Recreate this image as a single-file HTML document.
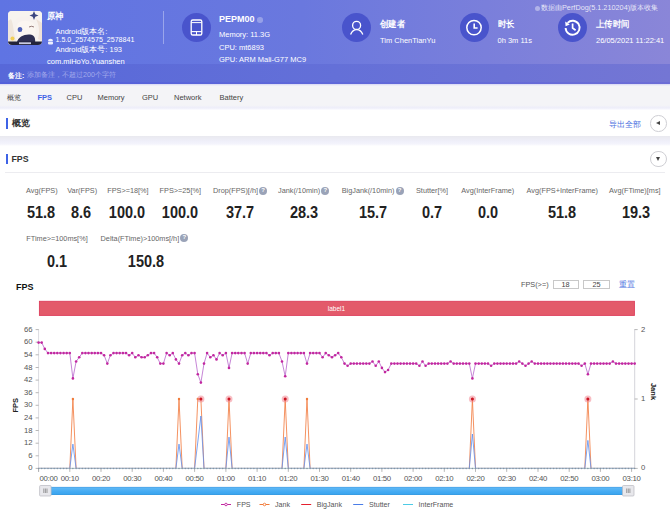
<!DOCTYPE html>
<html><head><meta charset="utf-8">
<style>
*{margin:0;padding:0;box-sizing:border-box}
html,body{width:670px;height:510px;overflow:hidden;background:#fff;font-family:"Liberation Sans",sans-serif;position:relative}
.a{position:absolute;white-space:nowrap}
#hdr{position:absolute;left:0;top:0;width:670px;height:84px;background:linear-gradient(90deg,#5f74e3 0%,#6a78de 45%,#8a86d8 100%)}
#rmk{position:absolute;left:0;top:63.8px;width:670px;height:20.2px;background:linear-gradient(90deg,#5768d9 0%,#6470d8 50%,#7476d4 100%)}
.circ{position:absolute;width:29px;height:29px;border-radius:50%;background:#4954cc;top:13px}
.circ svg{position:absolute;left:0;top:0}
.ht{position:absolute;color:#fff;font-size:7.5px;line-height:9px;white-space:nowrap}
.hb{position:absolute;color:#fff;font-size:9px;line-height:10px;font-weight:bold;white-space:nowrap}
#tabs{position:absolute;left:0;top:84px;width:670px;height:26px;background:linear-gradient(180deg,#f4f4f7 0%,#f4f4f7 82%,#eeeef9 90%,#f3f3fc 96%,#ffffff 100%)}
.tab{position:absolute;top:92.7px;font-size:7.5px;color:#444;line-height:10px;white-space:nowrap}
.card{position:absolute;left:0;width:670px;background:#fff}
.bar{position:absolute;left:6px;width:2px;background:#3e63e6}
.sec{position:absolute;left:11.5px;font-size:8.8px;font-weight:bold;color:#333;line-height:11px}
.lbl{position:absolute;font-size:7.3px;color:#666;line-height:9px;white-space:nowrap;text-align:center}
.val{position:absolute;font-size:15.6px;font-weight:bold;color:#222;line-height:16px;white-space:nowrap;text-align:center;transform:scaleX(0.93)}
.q{display:inline-block;width:7.5px;height:7.5px;border-radius:50%;background:#9aa3b8;color:#fff;font-size:6px;line-height:7.5px;text-align:center;vertical-align:0px;margin-left:1.5px;font-weight:bold;position:relative;top:-1.2px;width:8px;height:8px;margin-left:1.2px}
.rbtn{position:absolute;width:16.5px;height:16.5px;border-radius:50%;border:1px solid #cfcfd4;background:#fff}
</style></head><body>
<div id="hdr"></div>
<div id="rmk"></div>
<div class="a" style="left:0;top:81.5px;width:670px;height:2.5px;background:linear-gradient(90deg,#5260da 0%,#5f68d9 50%,#6c6dd6 100%)"></div>

<!-- app icon -->
<svg class="a" style="left:8px;top:11px" width="34" height="34" viewBox="0 0 34 34">
<defs><clipPath id="ic"><rect x="0" y="0" width="34" height="34" rx="4"/></clipPath></defs>
<g clip-path="url(#ic)">
<rect x="0" y="0" width="34" height="34" fill="#f7f2ee"/>
<path d="M0 0 H34 V10 C28 6 20 4 12 6 C6 8 3 14 2 22 V34 H0 Z" fill="#f7f4ef"/>
<path d="M3 8 C6 14 5 22 8 30 L4 34 H0 V10 Z" fill="#efe6dc"/>
<path d="M10 12 C14 9 22 9 26 13 C29 17 28 25 24 29 C19 32 13 31 10 27 C8 22 8 16 10 12 Z" fill="#fbf6f1"/>
<ellipse cx="12" cy="18.5" rx="2.3" ry="2.6" fill="#4f62b8"/>
<path d="M21 16 Q23.5 14.5 26 16" fill="none" stroke="#7a5a5a" stroke-width="0.8"/>
<path d="M26 0 L27.3 3.2 L30.5 4.5 L27.3 5.8 L26 9 L24.7 5.8 L21.5 4.5 L24.7 3.2 Z" fill="#3a4580"/>
<path d="M28 8 C31 14 32 20 30 28 L34 30 V12 Z" fill="#efe2d8"/>
<path d="M9 31 C10 26 16 23 22 23.5 C26 24 28 26 27 34 H8 Z" fill="#2e2f52"/>
<circle cx="4.5" cy="27.5" r="2" fill="#f2cf55"/>
<rect x="0" y="30.5" width="34" height="3.5" fill="#23243a"/>
<rect x="11" y="31.3" width="12" height="1.8" fill="#c9cbe0"/>
</g></svg>
<div class="hb" style="left:47px;top:11px;transform:scaleX(0.93);transform-origin:0 0">原神</div>
<div class="ht" style="left:55.5px;top:27px">Android版本名:</div>
<svg class="a" style="left:46.5px;top:37.5px" width="7" height="7" viewBox="0 0 7 7"><path d="M1 3 A2.5 2.3 0 0 1 6 3 Z" fill="#eef0ff"/><rect x="1" y="3.4" width="5" height="3" rx="0.8" fill="#eef0ff"/></svg>
<div class="ht" style="left:55.5px;top:36px;font-size:7.1px">1.5.0_2574575_2578841</div>
<div class="ht" style="left:55.5px;top:45px">Android版本号: 193</div>
<div class="ht" style="left:47px;top:57px">com.miHoYo.Yuanshen</div>

<div class="a" style="left:163px;top:11px;width:1px;height:33px;background:rgba(255,255,255,0.35)"></div>

<!-- device -->
<div class="circ" style="left:181.5px">
<svg width="29" height="29" viewBox="0 0 29 29"><rect x="9.2" y="7" width="10.6" height="15" rx="1.6" fill="none" stroke="#fff" stroke-width="1.3"/><line x1="9.2" y1="9.6" x2="19.8" y2="9.6" stroke="#fff" stroke-width="1"/><line x1="9.2" y1="18.6" x2="19.8" y2="18.6" stroke="#fff" stroke-width="1.1"/><line x1="14.5" y1="18.6" x2="14.5" y2="22" stroke="#fff" stroke-width="1"/></svg>
</div>
<div class="hb" style="left:219px;top:14px">PEPM00<span style="display:inline-block;width:5.5px;height:5.5px;border-radius:50%;background:rgba(255,255,255,0.3);margin-left:2.5px;vertical-align:-0.5px"></span></div>
<div class="ht" style="left:219px;top:30px">Memory: 11.3G</div>
<div class="ht" style="left:219px;top:43px">CPU: mt6893</div>
<div class="ht" style="left:219px;top:55px">GPU: ARM Mali-G77 MC9</div>

<!-- creator -->
<div class="circ" style="left:342px">
<svg width="29" height="29" viewBox="0 0 29 29"><circle cx="14.6" cy="12.4" r="4" fill="none" stroke="#fff" stroke-width="1.3"/><path d="M8.6 21.6 C9.8 18.4 12 16.6 14.7 16.6 C17.4 16.6 19.6 18.4 20.8 21.6" fill="none" stroke="#fff" stroke-width="1.3"/></svg>
</div>
<div class="hb" style="left:380px;top:18.5px;transform:scaleX(0.93);transform-origin:0 0">创建者</div>
<div class="ht" style="left:380px;top:35.5px">Tim ChenTianYu</div>

<!-- duration -->
<div class="circ" style="left:459.5px">
<svg width="29" height="29" viewBox="0 0 29 29"><circle cx="14" cy="14.6" r="7.2" fill="none" stroke="#fff" stroke-width="1.5"/><path d="M14.2 10.4 V15 H17.6" fill="none" stroke="#fff" stroke-width="1.6"/></svg>
</div>
<div class="hb" style="left:497.5px;top:18.5px;transform:scaleX(0.93);transform-origin:0 0">时长</div>
<div class="ht" style="left:497.5px;top:35.5px">0h 3m 11s</div>

<!-- upload -->
<div class="circ" style="left:558px">
<svg width="29" height="29" viewBox="0 0 29 29"><path d="M9.6 9.8 A7 7 0 1 1 7.6 15" fill="none" stroke="#fff" stroke-width="1.9"/><path d="M7.2 8.6 L7.6 13.2 L11.8 11.6 Z" fill="#fff"/><path d="M14.6 10.6 V15 L17.6 17.2" fill="none" stroke="#fff" stroke-width="1.7"/></svg>
</div>
<div class="hb" style="left:596px;top:18.5px;transform:scaleX(0.93);transform-origin:0 0">上传时间</div>
<div class="ht" style="left:596px;top:35.5px">26/05/2021 11:22:41</div>

<div class="a" style="left:534.5px;top:5.5px;width:5px;height:5px;border-radius:50%;background:rgba(255,255,255,0.4)"></div>
<div class="ht" style="left:541px;top:2.6px;font-size:7.3px;color:rgba(255,255,255,0.82)">数据由PerfDog(5.1.210204)版本收集</div>

<!-- remark -->
<div class="ht" style="left:8px;top:71px;font-weight:bold;font-size:7px">备注:</div>
<div class="ht" style="left:27px;top:71px;color:#a3aaec;font-size:7.1px">添加备注，不超过200个字符</div>

<!-- tabs -->
<div id="tabs"></div>
<div class="a" style="left:0;top:84px;width:670px;height:2px;background:linear-gradient(#d6d6f3,#f3f3f9)"></div>
<div class="tab" style="left:6.5px;font-size:6.9px">概览</div>
<div class="tab" style="left:37.5px;color:#3e63e6;font-weight:bold">FPS</div>
<div class="tab" style="left:66.5px">CPU</div>
<div class="tab" style="left:97.5px">Memory</div>
<div class="tab" style="left:142px">GPU</div>
<div class="tab" style="left:174px">Network</div>
<div class="tab" style="left:219.5px">Battery</div>

<!-- gray bg between cards -->
<div class="a" style="left:0;top:136.3px;width:670px;height:9.4px;background:linear-gradient(180deg,#e9e9ef 0%,#ececf4 25%,#f0f0fa 55%,#f4f4fc 80%,#ffffff 100%)"></div>

<div class="bar" style="top:118px;height:10.5px"></div>
<div class="sec" style="top:117.5px">概览</div>
<div class="a" style="left:608.5px;top:120px;font-size:7.5px;color:#4a6fe0;line-height:10px">导出全部</div>
<div class="rbtn" style="left:650.2px;top:115.3px"><div class="a" style="left:4.9px;top:5.1px;width:0;height:0;border-top:2.5px solid transparent;border-bottom:2.5px solid transparent;border-right:4px solid #444"></div></div>


<div class="bar" style="top:154px;height:9.5px"></div>
<div class="sec" style="top:153.5px">FPS</div>
<div class="rbtn" style="left:650.2px;top:150.6px"><div class="a" style="left:4.6px;top:5.9px;width:0;height:0;border-left:2.5px solid transparent;border-right:2.5px solid transparent;border-top:4px solid #444"></div></div>
<div class="a" style="left:5px;top:172px;width:660px;height:1px;background:#ececf0"></div>

<!-- stats -->
<div class="lbl" style="left:26.1px;top:186px">Avg(FPS)</div>
<div class="val" style="left:0.7px;top:205px;width:80px">51.8</div>
<div class="lbl" style="left:67.3px;top:186px">Var(FPS)</div>
<div class="val" style="left:41.1px;top:205px;width:80px">8.6</div>
<div class="lbl" style="left:107.2px;top:186px">FPS&gt;=18[%]</div>
<div class="val" style="left:87.4px;top:205px;width:80px">100.0</div>
<div class="lbl" style="left:159.6px;top:186px">FPS&gt;=25[%]</div>
<div class="val" style="left:140.2px;top:205px;width:80px">100.0</div>
<div class="lbl" style="left:213px;top:186px">Drop(FPS)[/h]<span class="q">?</span></div>
<div class="val" style="left:199.5px;top:205px;width:80px">37.7</div>
<div class="lbl" style="left:278px;top:186px">Jank(/10min)<span class="q">?</span></div>
<div class="val" style="left:263.7px;top:205px;width:80px">28.3</div>
<div class="lbl" style="left:341.7px;top:186px">BigJank(/10min)<span class="q">?</span></div>
<div class="val" style="left:333.3px;top:205px;width:80px">15.7</div>
<div class="lbl" style="left:416px;top:186px">Stutter[%]</div>
<div class="val" style="left:392.4px;top:205px;width:80px">0.7</div>
<div class="lbl" style="left:461.3px;top:186px">Avg(InterFrame)</div>
<div class="val" style="left:447.7px;top:205px;width:80px">0.0</div>
<div class="lbl" style="left:526.6px;top:186px">Avg(FPS+InterFrame)</div>
<div class="val" style="left:522.2px;top:205px;width:80px">51.8</div>
<div class="lbl" style="left:609.1px;top:186px">Avg(FTime)[ms]</div>
<div class="val" style="left:595.5px;top:205px;width:80px">19.3</div>
<div class="lbl" style="left:26.3px;top:233.6px">FTime&gt;=100ms[%]</div>
<div class="val" style="left:16.7px;top:253.5px;width:80px">0.1</div>
<div class="lbl" style="left:100.6px;top:233.6px">Delta(FTime)&gt;100ms[/h]<span class="q">?</span></div>
<div class="val" style="left:105.9px;top:253.5px;width:80px">150.8</div>

<!-- chart header -->
<div class="a" style="left:16px;top:282px;font-size:9px;font-weight:bold;color:#111;line-height:11px">FPS</div>
<div class="a" style="left:521px;top:280px;font-size:7.3px;color:#555;line-height:9px">FPS(&gt;=)</div>
<div class="a" style="left:552.5px;top:280px;width:26px;height:9px;border:0.8px solid #c8c8c8;font-size:7.3px;line-height:7px;text-align:center;color:#444">18</div>
<div class="a" style="left:583px;top:280px;width:27px;height:9px;border:0.8px solid #c8c8c8;font-size:7.3px;line-height:7px;text-align:center;color:#444">25</div>
<div class="a" style="left:619px;top:280px;font-size:7.5px;color:#4a6fe0;line-height:10px">重置</div>

<svg class="a" style="left:0;top:0" width="670" height="510" viewBox="0 0 670 510">
<rect x="39.4" y="301.3" width="595" height="14.1" fill="#e35a6a" stroke="#dc3d5a" stroke-width="0.9"/>
<text x="336.5" y="311.4" fill="#fff" font-size="6.5" text-anchor="middle" font-family="Liberation Sans">label1</text>
<line x1="38.6" y1="329.1" x2="38.6" y2="472" stroke="#d0d0d8" stroke-width="0.8"/>
<line x1="634.7" y1="329.1" x2="634.7" y2="468.4" stroke="#c8c8d0" stroke-width="0.8"/>
<line x1="35.6" y1="468.4" x2="38.6" y2="468.4" stroke="#999" stroke-width="0.7"/>
<text x="32.6" y="470.4" fill="#555" font-size="7.7" text-anchor="end" font-family="Liberation Sans">0</text>
<line x1="35.6" y1="455.8" x2="38.6" y2="455.8" stroke="#999" stroke-width="0.7"/>
<text x="32.6" y="457.8" fill="#555" font-size="7.7" text-anchor="end" font-family="Liberation Sans">6</text>
<line x1="35.6" y1="443.2" x2="38.6" y2="443.2" stroke="#999" stroke-width="0.7"/>
<text x="32.6" y="445.2" fill="#555" font-size="7.7" text-anchor="end" font-family="Liberation Sans">12</text>
<line x1="35.6" y1="430.5" x2="38.6" y2="430.5" stroke="#999" stroke-width="0.7"/>
<text x="32.6" y="432.5" fill="#555" font-size="7.7" text-anchor="end" font-family="Liberation Sans">18</text>
<line x1="35.6" y1="417.9" x2="38.6" y2="417.9" stroke="#999" stroke-width="0.7"/>
<text x="32.6" y="419.9" fill="#555" font-size="7.7" text-anchor="end" font-family="Liberation Sans">24</text>
<line x1="35.6" y1="405.3" x2="38.6" y2="405.3" stroke="#999" stroke-width="0.7"/>
<text x="32.6" y="407.3" fill="#555" font-size="7.7" text-anchor="end" font-family="Liberation Sans">30</text>
<line x1="35.6" y1="392.7" x2="38.6" y2="392.7" stroke="#999" stroke-width="0.7"/>
<text x="32.6" y="394.7" fill="#555" font-size="7.7" text-anchor="end" font-family="Liberation Sans">36</text>
<line x1="35.6" y1="380.1" x2="38.6" y2="380.1" stroke="#999" stroke-width="0.7"/>
<text x="32.6" y="382.1" fill="#555" font-size="7.7" text-anchor="end" font-family="Liberation Sans">42</text>
<line x1="35.6" y1="367.5" x2="38.6" y2="367.5" stroke="#999" stroke-width="0.7"/>
<text x="32.6" y="369.5" fill="#555" font-size="7.7" text-anchor="end" font-family="Liberation Sans">48</text>
<line x1="35.6" y1="354.8" x2="38.6" y2="354.8" stroke="#999" stroke-width="0.7"/>
<text x="32.6" y="356.8" fill="#555" font-size="7.7" text-anchor="end" font-family="Liberation Sans">54</text>
<line x1="35.6" y1="342.2" x2="38.6" y2="342.2" stroke="#999" stroke-width="0.7"/>
<text x="32.6" y="344.2" fill="#555" font-size="7.7" text-anchor="end" font-family="Liberation Sans">60</text>
<line x1="35.6" y1="329.6" x2="38.6" y2="329.6" stroke="#999" stroke-width="0.7"/>
<text x="32.6" y="331.6" fill="#555" font-size="7.7" text-anchor="end" font-family="Liberation Sans">66</text>
<line x1="634.7" y1="468.4" x2="637.7" y2="468.4" stroke="#999" stroke-width="0.7"/>
<text x="641" y="470.4" fill="#555" font-size="7.7" font-family="Liberation Sans">0</text>
<line x1="634.7" y1="399.0" x2="637.7" y2="399.0" stroke="#999" stroke-width="0.7"/>
<text x="641" y="401.0" fill="#555" font-size="7.7" font-family="Liberation Sans">1</text>
<line x1="634.7" y1="329.6" x2="637.7" y2="329.6" stroke="#999" stroke-width="0.7"/>
<text x="641" y="331.6" fill="#555" font-size="7.7" font-family="Liberation Sans">2</text>
<text transform="translate(18,405.3) rotate(-90)" fill="#222" font-size="7.5" font-weight="bold" text-anchor="middle" font-family="Liberation Sans">FPS</text>
<text transform="translate(651,391.5) rotate(90)" fill="#222" font-size="7.5" font-weight="bold" text-anchor="middle" font-family="Liberation Sans">Jank</text>
<line x1="38.6" y1="468.4" x2="634.7" y2="468.4" stroke="#a9c4cc" stroke-width="1"/>
<line x1="38.6" y1="468.4" x2="38.6" y2="471.9" stroke="#999" stroke-width="0.7"/>
<text x="48.5" y="480.7" fill="#555" font-size="7.8" letter-spacing="-0.3" text-anchor="middle" font-family="Liberation Sans">00:00</text>
<line x1="69.8" y1="468.4" x2="69.8" y2="471.9" stroke="#999" stroke-width="0.7"/>
<text x="69.8" y="480.7" fill="#555" font-size="7.8" letter-spacing="-0.3" text-anchor="middle" font-family="Liberation Sans">00:10</text>
<line x1="101.0" y1="468.4" x2="101.0" y2="471.9" stroke="#999" stroke-width="0.7"/>
<text x="101.0" y="480.7" fill="#555" font-size="7.8" letter-spacing="-0.3" text-anchor="middle" font-family="Liberation Sans">00:20</text>
<line x1="132.2" y1="468.4" x2="132.2" y2="471.9" stroke="#999" stroke-width="0.7"/>
<text x="132.2" y="480.7" fill="#555" font-size="7.8" letter-spacing="-0.3" text-anchor="middle" font-family="Liberation Sans">00:30</text>
<line x1="163.4" y1="468.4" x2="163.4" y2="471.9" stroke="#999" stroke-width="0.7"/>
<text x="163.4" y="480.7" fill="#555" font-size="7.8" letter-spacing="-0.3" text-anchor="middle" font-family="Liberation Sans">00:40</text>
<line x1="194.6" y1="468.4" x2="194.6" y2="471.9" stroke="#999" stroke-width="0.7"/>
<text x="194.6" y="480.7" fill="#555" font-size="7.8" letter-spacing="-0.3" text-anchor="middle" font-family="Liberation Sans">00:50</text>
<line x1="225.9" y1="468.4" x2="225.9" y2="471.9" stroke="#999" stroke-width="0.7"/>
<text x="225.9" y="480.7" fill="#555" font-size="7.8" letter-spacing="-0.3" text-anchor="middle" font-family="Liberation Sans">01:00</text>
<line x1="257.1" y1="468.4" x2="257.1" y2="471.9" stroke="#999" stroke-width="0.7"/>
<text x="257.1" y="480.7" fill="#555" font-size="7.8" letter-spacing="-0.3" text-anchor="middle" font-family="Liberation Sans">01:10</text>
<line x1="288.3" y1="468.4" x2="288.3" y2="471.9" stroke="#999" stroke-width="0.7"/>
<text x="288.3" y="480.7" fill="#555" font-size="7.8" letter-spacing="-0.3" text-anchor="middle" font-family="Liberation Sans">01:20</text>
<line x1="319.5" y1="468.4" x2="319.5" y2="471.9" stroke="#999" stroke-width="0.7"/>
<text x="319.5" y="480.7" fill="#555" font-size="7.8" letter-spacing="-0.3" text-anchor="middle" font-family="Liberation Sans">01:30</text>
<line x1="350.7" y1="468.4" x2="350.7" y2="471.9" stroke="#999" stroke-width="0.7"/>
<text x="350.7" y="480.7" fill="#555" font-size="7.8" letter-spacing="-0.3" text-anchor="middle" font-family="Liberation Sans">01:40</text>
<line x1="381.9" y1="468.4" x2="381.9" y2="471.9" stroke="#999" stroke-width="0.7"/>
<text x="381.9" y="480.7" fill="#555" font-size="7.8" letter-spacing="-0.3" text-anchor="middle" font-family="Liberation Sans">01:50</text>
<line x1="413.1" y1="468.4" x2="413.1" y2="471.9" stroke="#999" stroke-width="0.7"/>
<text x="413.1" y="480.7" fill="#555" font-size="7.8" letter-spacing="-0.3" text-anchor="middle" font-family="Liberation Sans">02:00</text>
<line x1="444.3" y1="468.4" x2="444.3" y2="471.9" stroke="#999" stroke-width="0.7"/>
<text x="444.3" y="480.7" fill="#555" font-size="7.8" letter-spacing="-0.3" text-anchor="middle" font-family="Liberation Sans">02:10</text>
<line x1="475.5" y1="468.4" x2="475.5" y2="471.9" stroke="#999" stroke-width="0.7"/>
<text x="475.5" y="480.7" fill="#555" font-size="7.8" letter-spacing="-0.3" text-anchor="middle" font-family="Liberation Sans">02:20</text>
<line x1="506.7" y1="468.4" x2="506.7" y2="471.9" stroke="#999" stroke-width="0.7"/>
<text x="506.7" y="480.7" fill="#555" font-size="7.8" letter-spacing="-0.3" text-anchor="middle" font-family="Liberation Sans">02:30</text>
<line x1="538.0" y1="468.4" x2="538.0" y2="471.9" stroke="#999" stroke-width="0.7"/>
<text x="538.0" y="480.7" fill="#555" font-size="7.8" letter-spacing="-0.3" text-anchor="middle" font-family="Liberation Sans">02:40</text>
<line x1="569.2" y1="468.4" x2="569.2" y2="471.9" stroke="#999" stroke-width="0.7"/>
<text x="569.2" y="480.7" fill="#555" font-size="7.8" letter-spacing="-0.3" text-anchor="middle" font-family="Liberation Sans">02:50</text>
<line x1="600.4" y1="468.4" x2="600.4" y2="471.9" stroke="#999" stroke-width="0.7"/>
<text x="600.4" y="480.7" fill="#555" font-size="7.8" letter-spacing="-0.3" text-anchor="middle" font-family="Liberation Sans">03:00</text>
<line x1="631.6" y1="468.4" x2="631.6" y2="471.9" stroke="#999" stroke-width="0.7"/>
<text x="631.6" y="480.7" fill="#555" font-size="7.8" letter-spacing="-0.3" text-anchor="middle" font-family="Liberation Sans">03:10</text>
<polyline points="38.6,468.4 41.7,468.4 44.8,468.4 48.0,468.4 51.1,468.4 54.2,468.4 57.3,468.4 60.4,468.4 63.6,468.4 66.7,468.4 69.8,468.4 72.9,399.0 76.1,468.4 79.2,468.4 82.3,468.4 85.4,468.4 88.5,468.4 91.7,468.4 94.8,468.4 97.9,468.4 101.0,468.4 104.1,468.4 107.3,468.4 110.4,468.4 113.5,468.4 116.6,468.4 119.7,468.4 122.9,468.4 126.0,468.4 129.1,468.4 132.2,468.4 135.3,468.4 138.5,468.4 141.6,468.4 144.7,468.4 147.8,468.4 151.0,468.4 154.1,468.4 157.2,468.4 160.3,468.4 163.4,468.4 166.6,468.4 169.7,468.4 172.8,468.4 175.9,468.4 179.0,399.0 182.2,468.4 185.3,468.4 188.4,468.4 191.5,468.4 194.6,468.4 197.8,399.0 200.9,399.0 204.0,468.4 207.1,468.4 210.3,468.4 213.4,468.4 216.5,468.4 219.6,468.4 222.7,468.4 225.9,468.4 229.0,399.0 232.1,468.4 235.2,468.4 238.3,468.4 241.5,468.4 244.6,468.4 247.7,468.4 250.8,468.4 253.9,468.4 257.1,468.4 260.2,468.4 263.3,468.4 266.4,468.4 269.5,468.4 272.7,468.4 275.8,468.4 278.9,468.4 282.0,468.4 285.2,399.0 288.3,468.4 291.4,468.4 294.5,468.4 297.6,468.4 300.8,468.4 303.9,468.4 307.0,399.0 310.1,468.4 313.2,468.4 316.4,468.4 319.5,468.4 322.6,468.4 325.7,468.4 328.8,468.4 332.0,468.4 335.1,468.4 338.2,468.4 341.3,468.4 344.5,468.4 347.6,468.4 350.7,468.4 353.8,468.4 356.9,468.4 360.1,468.4 363.2,468.4 366.3,468.4 369.4,468.4 372.5,468.4 375.7,468.4 378.8,468.4 381.9,468.4 385.0,468.4 388.1,468.4 391.3,468.4 394.4,468.4 397.5,468.4 400.6,468.4 403.8,468.4 406.9,468.4 410.0,468.4 413.1,468.4 416.2,468.4 419.4,468.4 422.5,468.4 425.6,468.4 428.7,468.4 431.8,468.4 435.0,468.4 438.1,468.4 441.2,468.4 444.3,468.4 447.4,468.4 450.6,468.4 453.7,468.4 456.8,468.4 459.9,468.4 463.0,468.4 466.2,468.4 469.3,468.4 472.4,399.0 475.5,468.4 478.7,468.4 481.8,468.4 484.9,468.4 488.0,468.4 491.1,468.4 494.3,468.4 497.4,468.4 500.5,468.4 503.6,468.4 506.7,468.4 509.9,468.4 513.0,468.4 516.1,468.4 519.2,468.4 522.3,468.4 525.5,468.4 528.6,468.4 531.7,468.4 534.8,468.4 538.0,468.4 541.1,468.4 544.2,468.4 547.3,468.4 550.4,468.4 553.6,468.4 556.7,468.4 559.8,468.4 562.9,468.4 566.0,468.4 569.2,468.4 572.3,468.4 575.4,468.4 578.5,468.4 581.6,468.4 584.8,468.4 587.9,399.0 591.0,468.4 594.1,468.4 597.2,468.4 600.4,468.4 603.5,468.4 606.6,468.4 609.7,468.4 612.9,468.4 616.0,468.4 619.1,468.4 622.2,468.4 625.3,468.4 628.5,468.4 631.6,468.4 634.7,468.4" fill="none" stroke="#f2783c" stroke-width="0.9" stroke-opacity="0.9"/>
<circle cx="72.9" cy="399.0" r="1.2" fill="#f07b3a"/>
<circle cx="179.0" cy="399.0" r="1.2" fill="#f07b3a"/>
<circle cx="197.8" cy="399.0" r="1.2" fill="#f07b3a"/>
<circle cx="200.9" cy="399.0" r="1.2" fill="#f07b3a"/>
<circle cx="229.0" cy="399.0" r="1.2" fill="#f07b3a"/>
<circle cx="285.2" cy="399.0" r="1.2" fill="#f07b3a"/>
<circle cx="307.0" cy="399.0" r="1.2" fill="#f07b3a"/>
<circle cx="472.4" cy="399.0" r="1.2" fill="#f07b3a"/>
<circle cx="587.9" cy="399.0" r="1.2" fill="#f07b3a"/>
<circle cx="200.9" cy="399.0" r="3.5" fill="#f27d8a" fill-opacity="0.5"/>
<circle cx="200.9" cy="399.0" r="1.5" fill="#cc1525"/>
<circle cx="229.0" cy="399.0" r="3.5" fill="#f27d8a" fill-opacity="0.5"/>
<circle cx="229.0" cy="399.0" r="1.5" fill="#cc1525"/>
<circle cx="285.2" cy="399.0" r="3.5" fill="#f27d8a" fill-opacity="0.5"/>
<circle cx="285.2" cy="399.0" r="1.5" fill="#cc1525"/>
<circle cx="472.4" cy="399.0" r="3.5" fill="#f27d8a" fill-opacity="0.5"/>
<circle cx="472.4" cy="399.0" r="1.5" fill="#cc1525"/>
<circle cx="587.9" cy="399.0" r="3.5" fill="#f27d8a" fill-opacity="0.5"/>
<circle cx="587.9" cy="399.0" r="1.5" fill="#cc1525"/>
<polyline points="38.6,468.4 41.7,468.4 44.8,468.4 48.0,468.4 51.1,468.4 54.2,468.4 57.3,468.4 60.4,468.4 63.6,468.4 66.7,468.4 69.8,468.4 72.9,444.1 76.1,468.4 79.2,468.4 82.3,468.4 85.4,468.4 88.5,468.4 91.7,468.4 94.8,468.4 97.9,468.4 101.0,468.4 104.1,468.4 107.3,468.4 110.4,468.4 113.5,468.4 116.6,468.4 119.7,468.4 122.9,468.4 126.0,468.4 129.1,468.4 132.2,468.4 135.3,468.4 138.5,468.4 141.6,468.4 144.7,468.4 147.8,468.4 151.0,468.4 154.1,468.4 157.2,468.4 160.3,468.4 163.4,468.4 166.6,468.4 169.7,468.4 172.8,468.4 175.9,468.4 179.0,444.1 182.2,468.4 185.3,468.4 188.4,468.4 191.5,468.4 194.6,468.4 197.8,442.0 200.9,416.0 204.0,468.4 207.1,468.4 210.3,468.4 213.4,468.4 216.5,468.4 219.6,468.4 222.7,468.4 225.9,468.4 229.0,437.1 232.1,468.4 235.2,468.4 238.3,468.4 241.5,468.4 244.6,468.4 247.7,468.4 250.8,468.4 253.9,468.4 257.1,468.4 260.2,468.4 263.3,468.4 266.4,468.4 269.5,468.4 272.7,468.4 275.8,468.4 278.9,468.4 282.0,468.4 285.2,437.0 288.3,468.4 291.4,468.4 294.5,468.4 297.6,468.4 300.8,468.4 303.9,468.4 307.0,444.1 310.1,468.4 313.2,468.4 316.4,468.4 319.5,468.4 322.6,468.4 325.7,468.4 328.8,468.4 332.0,468.4 335.1,468.4 338.2,468.4 341.3,468.4 344.5,468.4 347.6,468.4 350.7,468.4 353.8,468.4 356.9,468.4 360.1,468.4 363.2,468.4 366.3,468.4 369.4,468.4 372.5,468.4 375.7,468.4 378.8,468.4 381.9,468.4 385.0,468.4 388.1,468.4 391.3,468.4 394.4,468.4 397.5,468.4 400.6,468.4 403.8,468.4 406.9,468.4 410.0,468.4 413.1,468.4 416.2,468.4 419.4,468.4 422.5,468.4 425.6,468.4 428.7,468.4 431.8,468.4 435.0,468.4 438.1,468.4 441.2,468.4 444.3,468.4 447.4,468.4 450.6,468.4 453.7,468.4 456.8,468.4 459.9,468.4 463.0,468.4 466.2,468.4 469.3,468.4 472.4,434.0 475.5,468.4 478.7,468.4 481.8,468.4 484.9,468.4 488.0,468.4 491.1,468.4 494.3,468.4 497.4,468.4 500.5,468.4 503.6,468.4 506.7,468.4 509.9,468.4 513.0,468.4 516.1,468.4 519.2,468.4 522.3,468.4 525.5,468.4 528.6,468.4 531.7,468.4 534.8,468.4 538.0,468.4 541.1,468.4 544.2,468.4 547.3,468.4 550.4,468.4 553.6,468.4 556.7,468.4 559.8,468.4 562.9,468.4 566.0,468.4 569.2,468.4 572.3,468.4 575.4,468.4 578.5,468.4 581.6,468.4 584.8,468.4 587.9,440.4 591.0,468.4 594.1,468.4 597.2,468.4 600.4,468.4 603.5,468.4 606.6,468.4 609.7,468.4 612.9,468.4 616.0,468.4 619.1,468.4 622.2,468.4 625.3,468.4 628.5,468.4 631.6,468.4 634.7,468.4" fill="none" stroke="#5b8ff0" stroke-width="1" stroke-opacity="0.8"/>
<line x1="38.6" y1="468.4" x2="634.7" y2="468.4" stroke="#b3cbd2" stroke-width="0.8" stroke-opacity="1"/>
<circle cx="38.6" cy="468.4" r="0.75" fill="#8794a0"/>
<circle cx="41.7" cy="468.4" r="0.75" fill="#8794a0"/>
<circle cx="44.8" cy="468.4" r="0.75" fill="#8794a0"/>
<circle cx="48.0" cy="468.4" r="0.75" fill="#8794a0"/>
<circle cx="51.1" cy="468.4" r="0.75" fill="#8794a0"/>
<circle cx="54.2" cy="468.4" r="0.75" fill="#8794a0"/>
<circle cx="57.3" cy="468.4" r="0.75" fill="#8794a0"/>
<circle cx="60.4" cy="468.4" r="0.75" fill="#8794a0"/>
<circle cx="63.6" cy="468.4" r="0.75" fill="#8794a0"/>
<circle cx="66.7" cy="468.4" r="0.75" fill="#8794a0"/>
<circle cx="69.8" cy="468.4" r="0.75" fill="#8794a0"/>
<circle cx="72.9" cy="468.4" r="0.75" fill="#8794a0"/>
<circle cx="76.1" cy="468.4" r="0.75" fill="#8794a0"/>
<circle cx="79.2" cy="468.4" r="0.75" fill="#8794a0"/>
<circle cx="82.3" cy="468.4" r="0.75" fill="#8794a0"/>
<circle cx="85.4" cy="468.4" r="0.75" fill="#8794a0"/>
<circle cx="88.5" cy="468.4" r="0.75" fill="#8794a0"/>
<circle cx="91.7" cy="468.4" r="0.75" fill="#8794a0"/>
<circle cx="94.8" cy="468.4" r="0.75" fill="#8794a0"/>
<circle cx="97.9" cy="468.4" r="0.75" fill="#8794a0"/>
<circle cx="101.0" cy="468.4" r="0.75" fill="#8794a0"/>
<circle cx="104.1" cy="468.4" r="0.75" fill="#8794a0"/>
<circle cx="107.3" cy="468.4" r="0.75" fill="#8794a0"/>
<circle cx="110.4" cy="468.4" r="0.75" fill="#8794a0"/>
<circle cx="113.5" cy="468.4" r="0.75" fill="#8794a0"/>
<circle cx="116.6" cy="468.4" r="0.75" fill="#8794a0"/>
<circle cx="119.7" cy="468.4" r="0.75" fill="#8794a0"/>
<circle cx="122.9" cy="468.4" r="0.75" fill="#8794a0"/>
<circle cx="126.0" cy="468.4" r="0.75" fill="#8794a0"/>
<circle cx="129.1" cy="468.4" r="0.75" fill="#8794a0"/>
<circle cx="132.2" cy="468.4" r="0.75" fill="#8794a0"/>
<circle cx="135.3" cy="468.4" r="0.75" fill="#8794a0"/>
<circle cx="138.5" cy="468.4" r="0.75" fill="#8794a0"/>
<circle cx="141.6" cy="468.4" r="0.75" fill="#8794a0"/>
<circle cx="144.7" cy="468.4" r="0.75" fill="#8794a0"/>
<circle cx="147.8" cy="468.4" r="0.75" fill="#8794a0"/>
<circle cx="151.0" cy="468.4" r="0.75" fill="#8794a0"/>
<circle cx="154.1" cy="468.4" r="0.75" fill="#8794a0"/>
<circle cx="157.2" cy="468.4" r="0.75" fill="#8794a0"/>
<circle cx="160.3" cy="468.4" r="0.75" fill="#8794a0"/>
<circle cx="163.4" cy="468.4" r="0.75" fill="#8794a0"/>
<circle cx="166.6" cy="468.4" r="0.75" fill="#8794a0"/>
<circle cx="169.7" cy="468.4" r="0.75" fill="#8794a0"/>
<circle cx="172.8" cy="468.4" r="0.75" fill="#8794a0"/>
<circle cx="175.9" cy="468.4" r="0.75" fill="#8794a0"/>
<circle cx="179.0" cy="468.4" r="0.75" fill="#8794a0"/>
<circle cx="182.2" cy="468.4" r="0.75" fill="#8794a0"/>
<circle cx="185.3" cy="468.4" r="0.75" fill="#8794a0"/>
<circle cx="188.4" cy="468.4" r="0.75" fill="#8794a0"/>
<circle cx="191.5" cy="468.4" r="0.75" fill="#8794a0"/>
<circle cx="194.6" cy="468.4" r="0.75" fill="#8794a0"/>
<circle cx="197.8" cy="468.4" r="0.75" fill="#8794a0"/>
<circle cx="200.9" cy="468.4" r="0.75" fill="#8794a0"/>
<circle cx="204.0" cy="468.4" r="0.75" fill="#8794a0"/>
<circle cx="207.1" cy="468.4" r="0.75" fill="#8794a0"/>
<circle cx="210.3" cy="468.4" r="0.75" fill="#8794a0"/>
<circle cx="213.4" cy="468.4" r="0.75" fill="#8794a0"/>
<circle cx="216.5" cy="468.4" r="0.75" fill="#8794a0"/>
<circle cx="219.6" cy="468.4" r="0.75" fill="#8794a0"/>
<circle cx="222.7" cy="468.4" r="0.75" fill="#8794a0"/>
<circle cx="225.9" cy="468.4" r="0.75" fill="#8794a0"/>
<circle cx="229.0" cy="468.4" r="0.75" fill="#8794a0"/>
<circle cx="232.1" cy="468.4" r="0.75" fill="#8794a0"/>
<circle cx="235.2" cy="468.4" r="0.75" fill="#8794a0"/>
<circle cx="238.3" cy="468.4" r="0.75" fill="#8794a0"/>
<circle cx="241.5" cy="468.4" r="0.75" fill="#8794a0"/>
<circle cx="244.6" cy="468.4" r="0.75" fill="#8794a0"/>
<circle cx="247.7" cy="468.4" r="0.75" fill="#8794a0"/>
<circle cx="250.8" cy="468.4" r="0.75" fill="#8794a0"/>
<circle cx="253.9" cy="468.4" r="0.75" fill="#8794a0"/>
<circle cx="257.1" cy="468.4" r="0.75" fill="#8794a0"/>
<circle cx="260.2" cy="468.4" r="0.75" fill="#8794a0"/>
<circle cx="263.3" cy="468.4" r="0.75" fill="#8794a0"/>
<circle cx="266.4" cy="468.4" r="0.75" fill="#8794a0"/>
<circle cx="269.5" cy="468.4" r="0.75" fill="#8794a0"/>
<circle cx="272.7" cy="468.4" r="0.75" fill="#8794a0"/>
<circle cx="275.8" cy="468.4" r="0.75" fill="#8794a0"/>
<circle cx="278.9" cy="468.4" r="0.75" fill="#8794a0"/>
<circle cx="282.0" cy="468.4" r="0.75" fill="#8794a0"/>
<circle cx="285.2" cy="468.4" r="0.75" fill="#8794a0"/>
<circle cx="288.3" cy="468.4" r="0.75" fill="#8794a0"/>
<circle cx="291.4" cy="468.4" r="0.75" fill="#8794a0"/>
<circle cx="294.5" cy="468.4" r="0.75" fill="#8794a0"/>
<circle cx="297.6" cy="468.4" r="0.75" fill="#8794a0"/>
<circle cx="300.8" cy="468.4" r="0.75" fill="#8794a0"/>
<circle cx="303.9" cy="468.4" r="0.75" fill="#8794a0"/>
<circle cx="307.0" cy="468.4" r="0.75" fill="#8794a0"/>
<circle cx="310.1" cy="468.4" r="0.75" fill="#8794a0"/>
<circle cx="313.2" cy="468.4" r="0.75" fill="#8794a0"/>
<circle cx="316.4" cy="468.4" r="0.75" fill="#8794a0"/>
<circle cx="319.5" cy="468.4" r="0.75" fill="#8794a0"/>
<circle cx="322.6" cy="468.4" r="0.75" fill="#8794a0"/>
<circle cx="325.7" cy="468.4" r="0.75" fill="#8794a0"/>
<circle cx="328.8" cy="468.4" r="0.75" fill="#8794a0"/>
<circle cx="332.0" cy="468.4" r="0.75" fill="#8794a0"/>
<circle cx="335.1" cy="468.4" r="0.75" fill="#8794a0"/>
<circle cx="338.2" cy="468.4" r="0.75" fill="#8794a0"/>
<circle cx="341.3" cy="468.4" r="0.75" fill="#8794a0"/>
<circle cx="344.5" cy="468.4" r="0.75" fill="#8794a0"/>
<circle cx="347.6" cy="468.4" r="0.75" fill="#8794a0"/>
<circle cx="350.7" cy="468.4" r="0.75" fill="#8794a0"/>
<circle cx="353.8" cy="468.4" r="0.75" fill="#8794a0"/>
<circle cx="356.9" cy="468.4" r="0.75" fill="#8794a0"/>
<circle cx="360.1" cy="468.4" r="0.75" fill="#8794a0"/>
<circle cx="363.2" cy="468.4" r="0.75" fill="#8794a0"/>
<circle cx="366.3" cy="468.4" r="0.75" fill="#8794a0"/>
<circle cx="369.4" cy="468.4" r="0.75" fill="#8794a0"/>
<circle cx="372.5" cy="468.4" r="0.75" fill="#8794a0"/>
<circle cx="375.7" cy="468.4" r="0.75" fill="#8794a0"/>
<circle cx="378.8" cy="468.4" r="0.75" fill="#8794a0"/>
<circle cx="381.9" cy="468.4" r="0.75" fill="#8794a0"/>
<circle cx="385.0" cy="468.4" r="0.75" fill="#8794a0"/>
<circle cx="388.1" cy="468.4" r="0.75" fill="#8794a0"/>
<circle cx="391.3" cy="468.4" r="0.75" fill="#8794a0"/>
<circle cx="394.4" cy="468.4" r="0.75" fill="#8794a0"/>
<circle cx="397.5" cy="468.4" r="0.75" fill="#8794a0"/>
<circle cx="400.6" cy="468.4" r="0.75" fill="#8794a0"/>
<circle cx="403.8" cy="468.4" r="0.75" fill="#8794a0"/>
<circle cx="406.9" cy="468.4" r="0.75" fill="#8794a0"/>
<circle cx="410.0" cy="468.4" r="0.75" fill="#8794a0"/>
<circle cx="413.1" cy="468.4" r="0.75" fill="#8794a0"/>
<circle cx="416.2" cy="468.4" r="0.75" fill="#8794a0"/>
<circle cx="419.4" cy="468.4" r="0.75" fill="#8794a0"/>
<circle cx="422.5" cy="468.4" r="0.75" fill="#8794a0"/>
<circle cx="425.6" cy="468.4" r="0.75" fill="#8794a0"/>
<circle cx="428.7" cy="468.4" r="0.75" fill="#8794a0"/>
<circle cx="431.8" cy="468.4" r="0.75" fill="#8794a0"/>
<circle cx="435.0" cy="468.4" r="0.75" fill="#8794a0"/>
<circle cx="438.1" cy="468.4" r="0.75" fill="#8794a0"/>
<circle cx="441.2" cy="468.4" r="0.75" fill="#8794a0"/>
<circle cx="444.3" cy="468.4" r="0.75" fill="#8794a0"/>
<circle cx="447.4" cy="468.4" r="0.75" fill="#8794a0"/>
<circle cx="450.6" cy="468.4" r="0.75" fill="#8794a0"/>
<circle cx="453.7" cy="468.4" r="0.75" fill="#8794a0"/>
<circle cx="456.8" cy="468.4" r="0.75" fill="#8794a0"/>
<circle cx="459.9" cy="468.4" r="0.75" fill="#8794a0"/>
<circle cx="463.0" cy="468.4" r="0.75" fill="#8794a0"/>
<circle cx="466.2" cy="468.4" r="0.75" fill="#8794a0"/>
<circle cx="469.3" cy="468.4" r="0.75" fill="#8794a0"/>
<circle cx="472.4" cy="468.4" r="0.75" fill="#8794a0"/>
<circle cx="475.5" cy="468.4" r="0.75" fill="#8794a0"/>
<circle cx="478.7" cy="468.4" r="0.75" fill="#8794a0"/>
<circle cx="481.8" cy="468.4" r="0.75" fill="#8794a0"/>
<circle cx="484.9" cy="468.4" r="0.75" fill="#8794a0"/>
<circle cx="488.0" cy="468.4" r="0.75" fill="#8794a0"/>
<circle cx="491.1" cy="468.4" r="0.75" fill="#8794a0"/>
<circle cx="494.3" cy="468.4" r="0.75" fill="#8794a0"/>
<circle cx="497.4" cy="468.4" r="0.75" fill="#8794a0"/>
<circle cx="500.5" cy="468.4" r="0.75" fill="#8794a0"/>
<circle cx="503.6" cy="468.4" r="0.75" fill="#8794a0"/>
<circle cx="506.7" cy="468.4" r="0.75" fill="#8794a0"/>
<circle cx="509.9" cy="468.4" r="0.75" fill="#8794a0"/>
<circle cx="513.0" cy="468.4" r="0.75" fill="#8794a0"/>
<circle cx="516.1" cy="468.4" r="0.75" fill="#8794a0"/>
<circle cx="519.2" cy="468.4" r="0.75" fill="#8794a0"/>
<circle cx="522.3" cy="468.4" r="0.75" fill="#8794a0"/>
<circle cx="525.5" cy="468.4" r="0.75" fill="#8794a0"/>
<circle cx="528.6" cy="468.4" r="0.75" fill="#8794a0"/>
<circle cx="531.7" cy="468.4" r="0.75" fill="#8794a0"/>
<circle cx="534.8" cy="468.4" r="0.75" fill="#8794a0"/>
<circle cx="538.0" cy="468.4" r="0.75" fill="#8794a0"/>
<circle cx="541.1" cy="468.4" r="0.75" fill="#8794a0"/>
<circle cx="544.2" cy="468.4" r="0.75" fill="#8794a0"/>
<circle cx="547.3" cy="468.4" r="0.75" fill="#8794a0"/>
<circle cx="550.4" cy="468.4" r="0.75" fill="#8794a0"/>
<circle cx="553.6" cy="468.4" r="0.75" fill="#8794a0"/>
<circle cx="556.7" cy="468.4" r="0.75" fill="#8794a0"/>
<circle cx="559.8" cy="468.4" r="0.75" fill="#8794a0"/>
<circle cx="562.9" cy="468.4" r="0.75" fill="#8794a0"/>
<circle cx="566.0" cy="468.4" r="0.75" fill="#8794a0"/>
<circle cx="569.2" cy="468.4" r="0.75" fill="#8794a0"/>
<circle cx="572.3" cy="468.4" r="0.75" fill="#8794a0"/>
<circle cx="575.4" cy="468.4" r="0.75" fill="#8794a0"/>
<circle cx="578.5" cy="468.4" r="0.75" fill="#8794a0"/>
<circle cx="581.6" cy="468.4" r="0.75" fill="#8794a0"/>
<circle cx="584.8" cy="468.4" r="0.75" fill="#8794a0"/>
<circle cx="587.9" cy="468.4" r="0.75" fill="#8794a0"/>
<circle cx="591.0" cy="468.4" r="0.75" fill="#8794a0"/>
<circle cx="594.1" cy="468.4" r="0.75" fill="#8794a0"/>
<circle cx="597.2" cy="468.4" r="0.75" fill="#8794a0"/>
<circle cx="600.4" cy="468.4" r="0.75" fill="#8794a0"/>
<circle cx="603.5" cy="468.4" r="0.75" fill="#8794a0"/>
<circle cx="606.6" cy="468.4" r="0.75" fill="#8794a0"/>
<circle cx="609.7" cy="468.4" r="0.75" fill="#8794a0"/>
<circle cx="612.9" cy="468.4" r="0.75" fill="#8794a0"/>
<circle cx="616.0" cy="468.4" r="0.75" fill="#8794a0"/>
<circle cx="619.1" cy="468.4" r="0.75" fill="#8794a0"/>
<circle cx="622.2" cy="468.4" r="0.75" fill="#8794a0"/>
<circle cx="625.3" cy="468.4" r="0.75" fill="#8794a0"/>
<circle cx="628.5" cy="468.4" r="0.75" fill="#8794a0"/>
<circle cx="631.6" cy="468.4" r="0.75" fill="#8794a0"/>
<circle cx="634.7" cy="468.4" r="0.75" fill="#8794a0"/>
<polyline points="38.6,342.6 41.7,342.6 44.8,348.9 48.0,353.1 51.1,353.1 54.2,353.1 57.3,353.1 60.4,353.1 63.6,353.1 66.7,353.1 69.8,353.1 72.9,378.4 76.1,361.5 79.2,357.3 82.3,353.1 85.4,353.1 88.5,353.1 91.7,353.1 94.8,353.1 97.9,353.1 101.0,353.1 104.1,355.2 107.3,363.6 110.4,355.2 113.5,353.1 116.6,353.1 119.7,353.1 122.9,353.1 126.0,353.1 129.1,355.2 132.2,353.1 135.3,357.3 138.5,355.2 141.6,357.3 144.7,357.3 147.8,355.2 151.0,353.1 154.1,353.1 157.2,357.3 160.3,363.6 163.4,363.6 166.6,353.1 169.7,355.2 172.8,353.1 175.9,359.4 179.0,363.6 182.2,355.2 185.3,353.1 188.4,355.2 191.5,353.1 194.6,353.1 197.8,374.2 200.9,382.6 204.0,363.6 207.1,353.1 210.3,357.3 213.4,355.2 216.5,359.4 219.6,353.1 222.7,355.2 225.9,353.1 229.0,367.9 232.1,353.1 235.2,353.1 238.3,353.1 241.5,353.1 244.6,353.1 247.7,363.6 250.8,353.1 253.9,353.1 257.1,353.1 260.2,353.1 263.3,353.1 266.4,353.1 269.5,355.2 272.7,353.1 275.8,353.1 278.9,353.1 282.0,361.5 285.2,376.3 288.3,353.1 291.4,353.1 294.5,353.1 297.6,353.1 300.8,353.1 303.9,353.1 307.0,363.6 310.1,353.1 313.2,353.1 316.4,353.1 319.5,353.1 322.6,357.3 325.7,353.1 328.8,355.2 332.0,357.3 335.1,355.2 338.2,353.1 341.3,357.3 344.5,363.6 347.6,365.8 350.7,363.6 353.8,363.6 356.9,363.6 360.1,363.6 363.2,363.6 366.3,363.6 369.4,363.6 372.5,361.5 375.7,365.8 378.8,361.5 381.9,367.9 385.0,372.1 388.1,370.0 391.3,363.6 394.4,363.6 397.5,363.6 400.6,363.6 403.8,363.6 406.9,363.6 410.0,363.6 413.1,363.6 416.2,363.6 419.4,365.8 422.5,361.5 425.6,365.8 428.7,363.6 431.8,363.6 435.0,363.6 438.1,363.6 441.2,363.6 444.3,363.6 447.4,363.6 450.6,361.5 453.7,363.6 456.8,363.6 459.9,363.6 463.0,363.6 466.2,363.6 469.3,363.6 472.4,378.4 475.5,363.6 478.7,363.6 481.8,363.6 484.9,363.6 488.0,363.6 491.1,365.8 494.3,363.6 497.4,363.6 500.5,363.6 503.6,363.6 506.7,363.6 509.9,363.6 513.0,363.6 516.1,363.6 519.2,361.5 522.3,363.6 525.5,365.8 528.6,363.6 531.7,361.5 534.8,363.6 538.0,363.6 541.1,363.6 544.2,363.6 547.3,363.6 550.4,363.6 553.6,363.6 556.7,363.6 559.8,363.6 562.9,363.6 566.0,363.6 569.2,363.6 572.3,363.6 575.4,363.6 578.5,363.6 581.6,365.8 584.8,363.6 587.9,374.2 591.0,363.6 594.1,363.6 597.2,363.6 600.4,363.6 603.5,363.6 606.6,363.6 609.7,363.6 612.9,361.5 616.0,363.6 619.1,363.6 622.2,363.6 625.3,363.6 628.5,363.6 631.6,363.6 634.7,363.6" fill="none" stroke="#b866cc" stroke-width="0.8"/>
<circle cx="38.6" cy="342.6" r="1.3" fill="#c2279f"/>
<circle cx="41.7" cy="342.6" r="1.3" fill="#c2279f"/>
<circle cx="44.8" cy="348.9" r="1.3" fill="#c2279f"/>
<circle cx="48.0" cy="353.1" r="1.3" fill="#c2279f"/>
<circle cx="51.1" cy="353.1" r="1.3" fill="#c2279f"/>
<circle cx="54.2" cy="353.1" r="1.3" fill="#c2279f"/>
<circle cx="57.3" cy="353.1" r="1.3" fill="#c2279f"/>
<circle cx="60.4" cy="353.1" r="1.3" fill="#c2279f"/>
<circle cx="63.6" cy="353.1" r="1.3" fill="#c2279f"/>
<circle cx="66.7" cy="353.1" r="1.3" fill="#c2279f"/>
<circle cx="69.8" cy="353.1" r="1.3" fill="#c2279f"/>
<circle cx="72.9" cy="378.4" r="1.3" fill="#c2279f"/>
<circle cx="76.1" cy="361.5" r="1.3" fill="#c2279f"/>
<circle cx="79.2" cy="357.3" r="1.3" fill="#c2279f"/>
<circle cx="82.3" cy="353.1" r="1.3" fill="#c2279f"/>
<circle cx="85.4" cy="353.1" r="1.3" fill="#c2279f"/>
<circle cx="88.5" cy="353.1" r="1.3" fill="#c2279f"/>
<circle cx="91.7" cy="353.1" r="1.3" fill="#c2279f"/>
<circle cx="94.8" cy="353.1" r="1.3" fill="#c2279f"/>
<circle cx="97.9" cy="353.1" r="1.3" fill="#c2279f"/>
<circle cx="101.0" cy="353.1" r="1.3" fill="#c2279f"/>
<circle cx="104.1" cy="355.2" r="1.3" fill="#c2279f"/>
<circle cx="107.3" cy="363.6" r="1.3" fill="#c2279f"/>
<circle cx="110.4" cy="355.2" r="1.3" fill="#c2279f"/>
<circle cx="113.5" cy="353.1" r="1.3" fill="#c2279f"/>
<circle cx="116.6" cy="353.1" r="1.3" fill="#c2279f"/>
<circle cx="119.7" cy="353.1" r="1.3" fill="#c2279f"/>
<circle cx="122.9" cy="353.1" r="1.3" fill="#c2279f"/>
<circle cx="126.0" cy="353.1" r="1.3" fill="#c2279f"/>
<circle cx="129.1" cy="355.2" r="1.3" fill="#c2279f"/>
<circle cx="132.2" cy="353.1" r="1.3" fill="#c2279f"/>
<circle cx="135.3" cy="357.3" r="1.3" fill="#c2279f"/>
<circle cx="138.5" cy="355.2" r="1.3" fill="#c2279f"/>
<circle cx="141.6" cy="357.3" r="1.3" fill="#c2279f"/>
<circle cx="144.7" cy="357.3" r="1.3" fill="#c2279f"/>
<circle cx="147.8" cy="355.2" r="1.3" fill="#c2279f"/>
<circle cx="151.0" cy="353.1" r="1.3" fill="#c2279f"/>
<circle cx="154.1" cy="353.1" r="1.3" fill="#c2279f"/>
<circle cx="157.2" cy="357.3" r="1.3" fill="#c2279f"/>
<circle cx="160.3" cy="363.6" r="1.3" fill="#c2279f"/>
<circle cx="163.4" cy="363.6" r="1.3" fill="#c2279f"/>
<circle cx="166.6" cy="353.1" r="1.3" fill="#c2279f"/>
<circle cx="169.7" cy="355.2" r="1.3" fill="#c2279f"/>
<circle cx="172.8" cy="353.1" r="1.3" fill="#c2279f"/>
<circle cx="175.9" cy="359.4" r="1.3" fill="#c2279f"/>
<circle cx="179.0" cy="363.6" r="1.3" fill="#c2279f"/>
<circle cx="182.2" cy="355.2" r="1.3" fill="#c2279f"/>
<circle cx="185.3" cy="353.1" r="1.3" fill="#c2279f"/>
<circle cx="188.4" cy="355.2" r="1.3" fill="#c2279f"/>
<circle cx="191.5" cy="353.1" r="1.3" fill="#c2279f"/>
<circle cx="194.6" cy="353.1" r="1.3" fill="#c2279f"/>
<circle cx="197.8" cy="374.2" r="1.3" fill="#c2279f"/>
<circle cx="200.9" cy="382.6" r="1.3" fill="#c2279f"/>
<circle cx="204.0" cy="363.6" r="1.3" fill="#c2279f"/>
<circle cx="207.1" cy="353.1" r="1.3" fill="#c2279f"/>
<circle cx="210.3" cy="357.3" r="1.3" fill="#c2279f"/>
<circle cx="213.4" cy="355.2" r="1.3" fill="#c2279f"/>
<circle cx="216.5" cy="359.4" r="1.3" fill="#c2279f"/>
<circle cx="219.6" cy="353.1" r="1.3" fill="#c2279f"/>
<circle cx="222.7" cy="355.2" r="1.3" fill="#c2279f"/>
<circle cx="225.9" cy="353.1" r="1.3" fill="#c2279f"/>
<circle cx="229.0" cy="367.9" r="1.3" fill="#c2279f"/>
<circle cx="232.1" cy="353.1" r="1.3" fill="#c2279f"/>
<circle cx="235.2" cy="353.1" r="1.3" fill="#c2279f"/>
<circle cx="238.3" cy="353.1" r="1.3" fill="#c2279f"/>
<circle cx="241.5" cy="353.1" r="1.3" fill="#c2279f"/>
<circle cx="244.6" cy="353.1" r="1.3" fill="#c2279f"/>
<circle cx="247.7" cy="363.6" r="1.3" fill="#c2279f"/>
<circle cx="250.8" cy="353.1" r="1.3" fill="#c2279f"/>
<circle cx="253.9" cy="353.1" r="1.3" fill="#c2279f"/>
<circle cx="257.1" cy="353.1" r="1.3" fill="#c2279f"/>
<circle cx="260.2" cy="353.1" r="1.3" fill="#c2279f"/>
<circle cx="263.3" cy="353.1" r="1.3" fill="#c2279f"/>
<circle cx="266.4" cy="353.1" r="1.3" fill="#c2279f"/>
<circle cx="269.5" cy="355.2" r="1.3" fill="#c2279f"/>
<circle cx="272.7" cy="353.1" r="1.3" fill="#c2279f"/>
<circle cx="275.8" cy="353.1" r="1.3" fill="#c2279f"/>
<circle cx="278.9" cy="353.1" r="1.3" fill="#c2279f"/>
<circle cx="282.0" cy="361.5" r="1.3" fill="#c2279f"/>
<circle cx="285.2" cy="376.3" r="1.3" fill="#c2279f"/>
<circle cx="288.3" cy="353.1" r="1.3" fill="#c2279f"/>
<circle cx="291.4" cy="353.1" r="1.3" fill="#c2279f"/>
<circle cx="294.5" cy="353.1" r="1.3" fill="#c2279f"/>
<circle cx="297.6" cy="353.1" r="1.3" fill="#c2279f"/>
<circle cx="300.8" cy="353.1" r="1.3" fill="#c2279f"/>
<circle cx="303.9" cy="353.1" r="1.3" fill="#c2279f"/>
<circle cx="307.0" cy="363.6" r="1.3" fill="#c2279f"/>
<circle cx="310.1" cy="353.1" r="1.3" fill="#c2279f"/>
<circle cx="313.2" cy="353.1" r="1.3" fill="#c2279f"/>
<circle cx="316.4" cy="353.1" r="1.3" fill="#c2279f"/>
<circle cx="319.5" cy="353.1" r="1.3" fill="#c2279f"/>
<circle cx="322.6" cy="357.3" r="1.3" fill="#c2279f"/>
<circle cx="325.7" cy="353.1" r="1.3" fill="#c2279f"/>
<circle cx="328.8" cy="355.2" r="1.3" fill="#c2279f"/>
<circle cx="332.0" cy="357.3" r="1.3" fill="#c2279f"/>
<circle cx="335.1" cy="355.2" r="1.3" fill="#c2279f"/>
<circle cx="338.2" cy="353.1" r="1.3" fill="#c2279f"/>
<circle cx="341.3" cy="357.3" r="1.3" fill="#c2279f"/>
<circle cx="344.5" cy="363.6" r="1.3" fill="#c2279f"/>
<circle cx="347.6" cy="365.8" r="1.3" fill="#c2279f"/>
<circle cx="350.7" cy="363.6" r="1.3" fill="#c2279f"/>
<circle cx="353.8" cy="363.6" r="1.3" fill="#c2279f"/>
<circle cx="356.9" cy="363.6" r="1.3" fill="#c2279f"/>
<circle cx="360.1" cy="363.6" r="1.3" fill="#c2279f"/>
<circle cx="363.2" cy="363.6" r="1.3" fill="#c2279f"/>
<circle cx="366.3" cy="363.6" r="1.3" fill="#c2279f"/>
<circle cx="369.4" cy="363.6" r="1.3" fill="#c2279f"/>
<circle cx="372.5" cy="361.5" r="1.3" fill="#c2279f"/>
<circle cx="375.7" cy="365.8" r="1.3" fill="#c2279f"/>
<circle cx="378.8" cy="361.5" r="1.3" fill="#c2279f"/>
<circle cx="381.9" cy="367.9" r="1.3" fill="#c2279f"/>
<circle cx="385.0" cy="372.1" r="1.3" fill="#c2279f"/>
<circle cx="388.1" cy="370.0" r="1.3" fill="#c2279f"/>
<circle cx="391.3" cy="363.6" r="1.3" fill="#c2279f"/>
<circle cx="394.4" cy="363.6" r="1.3" fill="#c2279f"/>
<circle cx="397.5" cy="363.6" r="1.3" fill="#c2279f"/>
<circle cx="400.6" cy="363.6" r="1.3" fill="#c2279f"/>
<circle cx="403.8" cy="363.6" r="1.3" fill="#c2279f"/>
<circle cx="406.9" cy="363.6" r="1.3" fill="#c2279f"/>
<circle cx="410.0" cy="363.6" r="1.3" fill="#c2279f"/>
<circle cx="413.1" cy="363.6" r="1.3" fill="#c2279f"/>
<circle cx="416.2" cy="363.6" r="1.3" fill="#c2279f"/>
<circle cx="419.4" cy="365.8" r="1.3" fill="#c2279f"/>
<circle cx="422.5" cy="361.5" r="1.3" fill="#c2279f"/>
<circle cx="425.6" cy="365.8" r="1.3" fill="#c2279f"/>
<circle cx="428.7" cy="363.6" r="1.3" fill="#c2279f"/>
<circle cx="431.8" cy="363.6" r="1.3" fill="#c2279f"/>
<circle cx="435.0" cy="363.6" r="1.3" fill="#c2279f"/>
<circle cx="438.1" cy="363.6" r="1.3" fill="#c2279f"/>
<circle cx="441.2" cy="363.6" r="1.3" fill="#c2279f"/>
<circle cx="444.3" cy="363.6" r="1.3" fill="#c2279f"/>
<circle cx="447.4" cy="363.6" r="1.3" fill="#c2279f"/>
<circle cx="450.6" cy="361.5" r="1.3" fill="#c2279f"/>
<circle cx="453.7" cy="363.6" r="1.3" fill="#c2279f"/>
<circle cx="456.8" cy="363.6" r="1.3" fill="#c2279f"/>
<circle cx="459.9" cy="363.6" r="1.3" fill="#c2279f"/>
<circle cx="463.0" cy="363.6" r="1.3" fill="#c2279f"/>
<circle cx="466.2" cy="363.6" r="1.3" fill="#c2279f"/>
<circle cx="469.3" cy="363.6" r="1.3" fill="#c2279f"/>
<circle cx="472.4" cy="378.4" r="1.3" fill="#c2279f"/>
<circle cx="475.5" cy="363.6" r="1.3" fill="#c2279f"/>
<circle cx="478.7" cy="363.6" r="1.3" fill="#c2279f"/>
<circle cx="481.8" cy="363.6" r="1.3" fill="#c2279f"/>
<circle cx="484.9" cy="363.6" r="1.3" fill="#c2279f"/>
<circle cx="488.0" cy="363.6" r="1.3" fill="#c2279f"/>
<circle cx="491.1" cy="365.8" r="1.3" fill="#c2279f"/>
<circle cx="494.3" cy="363.6" r="1.3" fill="#c2279f"/>
<circle cx="497.4" cy="363.6" r="1.3" fill="#c2279f"/>
<circle cx="500.5" cy="363.6" r="1.3" fill="#c2279f"/>
<circle cx="503.6" cy="363.6" r="1.3" fill="#c2279f"/>
<circle cx="506.7" cy="363.6" r="1.3" fill="#c2279f"/>
<circle cx="509.9" cy="363.6" r="1.3" fill="#c2279f"/>
<circle cx="513.0" cy="363.6" r="1.3" fill="#c2279f"/>
<circle cx="516.1" cy="363.6" r="1.3" fill="#c2279f"/>
<circle cx="519.2" cy="361.5" r="1.3" fill="#c2279f"/>
<circle cx="522.3" cy="363.6" r="1.3" fill="#c2279f"/>
<circle cx="525.5" cy="365.8" r="1.3" fill="#c2279f"/>
<circle cx="528.6" cy="363.6" r="1.3" fill="#c2279f"/>
<circle cx="531.7" cy="361.5" r="1.3" fill="#c2279f"/>
<circle cx="534.8" cy="363.6" r="1.3" fill="#c2279f"/>
<circle cx="538.0" cy="363.6" r="1.3" fill="#c2279f"/>
<circle cx="541.1" cy="363.6" r="1.3" fill="#c2279f"/>
<circle cx="544.2" cy="363.6" r="1.3" fill="#c2279f"/>
<circle cx="547.3" cy="363.6" r="1.3" fill="#c2279f"/>
<circle cx="550.4" cy="363.6" r="1.3" fill="#c2279f"/>
<circle cx="553.6" cy="363.6" r="1.3" fill="#c2279f"/>
<circle cx="556.7" cy="363.6" r="1.3" fill="#c2279f"/>
<circle cx="559.8" cy="363.6" r="1.3" fill="#c2279f"/>
<circle cx="562.9" cy="363.6" r="1.3" fill="#c2279f"/>
<circle cx="566.0" cy="363.6" r="1.3" fill="#c2279f"/>
<circle cx="569.2" cy="363.6" r="1.3" fill="#c2279f"/>
<circle cx="572.3" cy="363.6" r="1.3" fill="#c2279f"/>
<circle cx="575.4" cy="363.6" r="1.3" fill="#c2279f"/>
<circle cx="578.5" cy="363.6" r="1.3" fill="#c2279f"/>
<circle cx="581.6" cy="365.8" r="1.3" fill="#c2279f"/>
<circle cx="584.8" cy="363.6" r="1.3" fill="#c2279f"/>
<circle cx="587.9" cy="374.2" r="1.3" fill="#c2279f"/>
<circle cx="591.0" cy="363.6" r="1.3" fill="#c2279f"/>
<circle cx="594.1" cy="363.6" r="1.3" fill="#c2279f"/>
<circle cx="597.2" cy="363.6" r="1.3" fill="#c2279f"/>
<circle cx="600.4" cy="363.6" r="1.3" fill="#c2279f"/>
<circle cx="603.5" cy="363.6" r="1.3" fill="#c2279f"/>
<circle cx="606.6" cy="363.6" r="1.3" fill="#c2279f"/>
<circle cx="609.7" cy="363.6" r="1.3" fill="#c2279f"/>
<circle cx="612.9" cy="361.5" r="1.3" fill="#c2279f"/>
<circle cx="616.0" cy="363.6" r="1.3" fill="#c2279f"/>
<circle cx="619.1" cy="363.6" r="1.3" fill="#c2279f"/>
<circle cx="622.2" cy="363.6" r="1.3" fill="#c2279f"/>
<circle cx="625.3" cy="363.6" r="1.3" fill="#c2279f"/>
<circle cx="628.5" cy="363.6" r="1.3" fill="#c2279f"/>
<circle cx="631.6" cy="363.6" r="1.3" fill="#c2279f"/>
<circle cx="634.7" cy="363.6" r="1.3" fill="#c2279f"/>
<defs><linearGradient id="sg" x1="0" y1="0" x2="0" y2="1"><stop offset="0" stop-color="#3f93dc"/><stop offset="0.12" stop-color="#5db8f6"/><stop offset="0.6" stop-color="#44aaf2"/><stop offset="0.9" stop-color="#3aa4ef"/><stop offset="1" stop-color="#3590d0"/></linearGradient></defs><rect x="51" y="486.9" width="572" height="8.1" fill="url(#sg)"/>
<rect x="39.6" y="485.5" width="11.5" height="10.5" rx="1" fill="#e8e8ec" stroke="#b8b8c0" stroke-width="0.7"/>
<line x1="43.8" y1="488.5" x2="43.8" y2="493" stroke="#777" stroke-width="0.7"/>
<line x1="45.4" y1="488.5" x2="45.4" y2="493" stroke="#777" stroke-width="0.7"/>
<line x1="47.0" y1="488.5" x2="47.0" y2="493" stroke="#777" stroke-width="0.7"/>
<rect x="622.5" y="485.5" width="11.5" height="10.5" rx="1" fill="#e8e8ec" stroke="#b8b8c0" stroke-width="0.7"/>
<line x1="626.7" y1="488.5" x2="626.7" y2="493" stroke="#777" stroke-width="0.7"/>
<line x1="628.3" y1="488.5" x2="628.3" y2="493" stroke="#777" stroke-width="0.7"/>
<line x1="629.9" y1="488.5" x2="629.9" y2="493" stroke="#777" stroke-width="0.7"/>
<line x1="221" y1="504.5" x2="231" y2="504.5" stroke="#c2279f" stroke-width="1"/>
<circle cx="226" cy="504.5" r="1.3" fill="#fff" stroke="#c2279f" stroke-width="0.9"/>
<text x="236.8" y="507.2" fill="#555" font-size="7.1" font-family="Liberation Sans">FPS</text>
<line x1="259.5" y1="504.5" x2="269.5" y2="504.5" stroke="#f07b3a" stroke-width="1"/>
<circle cx="264.5" cy="504.5" r="1.3" fill="#fff" stroke="#f07b3a" stroke-width="0.9"/>
<text x="275" y="507.2" fill="#555" font-size="7.1" font-family="Liberation Sans">Jank</text>
<line x1="301.2" y1="504.5" x2="311.2" y2="504.5" stroke="#e5202f" stroke-width="1"/>
<text x="316.7" y="507.2" fill="#555" font-size="7.1" font-family="Liberation Sans">BigJank</text>
<line x1="353.2" y1="504.5" x2="363.2" y2="504.5" stroke="#4a7de8" stroke-width="1"/>
<text x="369" y="507.2" fill="#555" font-size="7.1" font-family="Liberation Sans">Stutter</text>
<line x1="403" y1="504.5" x2="413" y2="504.5" stroke="#4dcbe6" stroke-width="1"/>
<text x="418.6" y="507.2" fill="#555" font-size="7.1" font-family="Liberation Sans">InterFrame</text>
</svg>
</body></html>
